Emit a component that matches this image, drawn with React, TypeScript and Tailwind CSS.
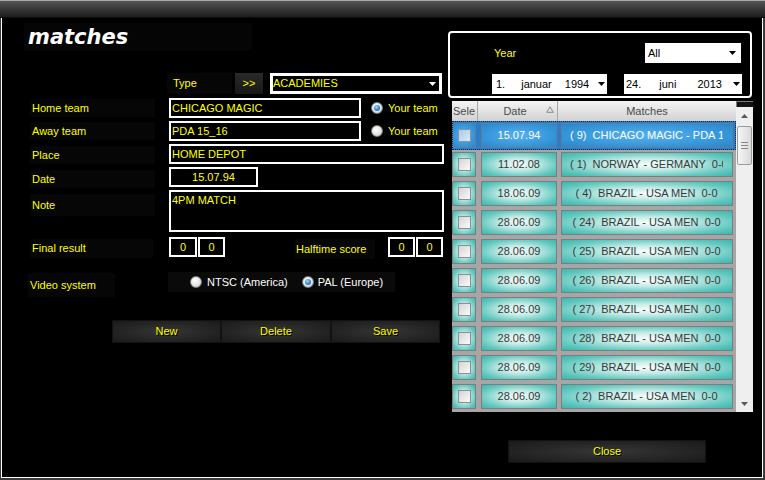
import type { ReactNode } from 'react';

const YELLOW = 'text-[#ffff00]';

const rows = [
  { date: '15.07.94', text: '( 9)  CHICAGO MAGIC - PDA 15_16  0-0', selected: true },
  { date: '11.02.08', text: '( 1)  NORWAY - GERMANY  0-0' },
  { date: '18.06.09', text: '( 4)  BRAZIL - USA MEN  0-0' },
  { date: '28.06.09', text: '( 24)  BRAZIL - USA MEN  0-0' },
  { date: '28.06.09', text: '( 25)  BRAZIL - USA MEN  0-0' },
  { date: '28.06.09', text: '( 26)  BRAZIL - USA MEN  0-0' },
  { date: '28.06.09', text: '( 27)  BRAZIL - USA MEN  0-0' },
  { date: '28.06.09', text: '( 28)  BRAZIL - USA MEN  0-0' },
  { date: '28.06.09', text: '( 29)  BRAZIL - USA MEN  0-0' },
  { date: '28.06.09', text: '( 2)  BRAZIL - USA MEN  0-0' },
  // only the top edge of this row shows below the last full one
  { date: '', text: '' },
];

function DownArrow({ color = '#000' }: { color?: string }) {
  return (
    <svg width="7" height="4" viewBox="0 0 7 4">
      <polygon points="0,0 7,0 3.5,4" fill={color} />
    </svg>
  );
}

function Radio({ checked }: { checked?: boolean }) {
  return (
    <span className="w-[12px] h-[12px] rounded-full border border-[#7c7c7c] bg-[radial-gradient(circle_at_40%_35%,#ffffff_0%,#e4e4e4_55%,#bdbdbd_100%)] flex items-center justify-center shrink-0">
      {checked && (
        <span className="w-[6px] h-[6px] rounded-full bg-[radial-gradient(circle_at_40%_35%,#a8dcff_0%,#2f86d6_55%,#184d86_100%)]" />
      )}
    </span>
  );
}

function Label({ children, className = '' }: { children: ReactNode; className?: string }) {
  return (
    <div className={`bg-[#060606] flex items-center ${YELLOW} ${className}`}>{children}</div>
  );
}

function Box({ className = '', children }: { className?: string; children?: ReactNode }) {
  return (
    <div className={`border-2 border-white bg-black ${YELLOW} leading-[16px] whitespace-pre overflow-hidden ${className}`}>
      {children}
    </div>
  );
}

function DarkButton({ className = '', children }: { className?: string; children: ReactNode }) {
  return (
    <div
      className={`h-[23px] flex items-center justify-center bg-[radial-gradient(ellipse_at_center,#363636_0%,#262626_55%,#1a1a1a_100%)] border border-[#121212] ${YELLOW} [text-shadow:1px_1px_0_#000] ${className}`}
    >
      {children}
    </div>
  );
}

function Checkbox({ selected }: { selected?: boolean }) {
  return (
    <span
      className={`w-[13px] h-[13px] border ${
        selected
          ? 'border-[#7e95ad] bg-gradient-to-br from-[#aac8e4] to-[#dbe9f5]'
          : 'border-[#8e8e8e] bg-gradient-to-br from-[#d4d4d4] to-[#fbfbfb]'
      }`}
    />
  );
}

function GridRow({ date, text, selected }: { date: string; text: string; selected?: boolean }) {
  const cell = selected
    ? 'border border-[#5f7f9c] bg-[radial-gradient(ellipse_at_center,#58b1ee_0%,#3898dc_60%,#2b85c9_100%)] text-white'
    : 'border border-[#7d7d7d] bg-[radial-gradient(ellipse_at_center,#f6fcfb_0%,#c4ebe6_35%,#62c8bf_75%,#3cb6ad_100%)] text-[#383838]';
  return (
    <div
      className={`h-[29px] shrink-0 flex items-start pt-[2px] ${
        selected ? 'bg-[#2c7cc8] outline outline-1 outline-dotted outline-[#0d2a4d] -outline-offset-1' : 'bg-[#a6a6a6]'
      }`}
    >
      <div className={`w-[24px] h-[25px] flex items-center justify-center ${cell}`}>
        <Checkbox selected={selected} />
      </div>
      <div className={`ml-[5px] w-[76px] h-[25px] flex items-center justify-center ${cell}`}>{date}</div>
      <div className={`ml-[4px] w-[172px] h-[25px] pl-[8px] pr-[9px] flex items-center ${cell}`}>
        <div className="w-full overflow-hidden whitespace-pre text-center">{text}</div>
      </div>
    </div>
  );
}

export default function App() {
  return (
    <div className="w-[765px] h-[480px] bg-[#3a3a3a] flex flex-col font-['Liberation_Sans',Arial,sans-serif] text-[11px] leading-[13px] overflow-hidden">
      {/* title bar */}
      <div className="h-[18px] shrink-0 border-t border-[#a9a9a9] bg-gradient-to-b from-[#555555] to-[#1d1d1d] border-b border-b-[#0e0e0e]" />

      <div className="flex-1 flex bg-black ml-[1px] mr-[2px] mb-[2px] border-l border-r border-b border-white">
        {/* left panel */}
        <div className="w-[445px] shrink-0 flex flex-col">
          <div className="mt-[5px] ml-[22px] w-[228px] h-[28px] bg-[#050505] flex items-center pl-[4px]">
            <span className="font-['DejaVu_Sans',sans-serif] font-bold italic text-[21px] leading-[28px] text-white">
              matches
            </span>
          </div>

          {/* type */}
          <div className="mt-[22px] ml-[165px] flex h-[21px]">
            <Label className="w-[65px] pl-[6px]">Type</Label>
            <div className={`ml-[3px] w-[28px] bg-gradient-to-b from-[#2b2b2b] to-[#171717] flex items-center justify-center ${YELLOW}`}>
              &gt;&gt;
            </div>
            <div className={`ml-[7px] w-[172px] border-[3px] border-white bg-black flex items-center justify-between pr-[3px] ${YELLOW}`}>
              <span>ACADEMIES</span>
              <DownArrow color="#ffffff" />
            </div>
          </div>

          {/* home team */}
          <div className="mt-[4px] flex items-center h-[20px]">
            <Label className="ml-[28px] w-[125px] h-[18px] pl-[2px]">Home team</Label>
            <Box className="ml-[14px] w-[192px] h-[20px] pl-[1px]">CHICAGO MAGIC</Box>
            <span className="ml-[10px]"><Radio checked /></span>
            <span className={`ml-[5px] ${YELLOW}`}>Your team</span>
          </div>

          {/* away team */}
          <div className="mt-[3px] flex items-center h-[20px]">
            <Label className="ml-[28px] w-[125px] h-[18px] pl-[2px]">Away team</Label>
            <Box className="ml-[14px] w-[192px] h-[20px] pl-[1px]">PDA 15_16</Box>
            <span className="ml-[10px]"><Radio /></span>
            <span className={`ml-[5px] ${YELLOW}`}>Your team</span>
          </div>

          {/* place */}
          <div className="mt-[3px] flex items-start h-[20px]">
            <Label className="ml-[28px] w-[125px] h-[18px] mt-[2px] pl-[2px]">Place</Label>
            <Box className="ml-[14px] w-[275px] h-[20px] pl-[1px]">HOME DEPOT</Box>
          </div>

          {/* date */}
          <div className="mt-[3px] flex items-start h-[20px]">
            <Label className="ml-[28px] w-[125px] h-[18px] mt-[3px] pl-[2px]">Date</Label>
            <Box className="ml-[14px] w-[89px] h-[20px] text-center">15.07.94</Box>
          </div>

          {/* note */}
          <div className="mt-[3px] flex items-start h-[42px]">
            <Label className="ml-[28px] w-[125px] h-[22px] mt-[4px] pl-[2px]">Note</Label>
            <Box className="ml-[14px] w-[275px] h-[42px] pl-[1px]">4PM MATCH</Box>
          </div>

          {/* scores */}
          <div className="mt-[5px] flex items-start h-[20px]">
            <Label className="ml-[28px] w-[123px] h-[19px] mt-[2px] pl-[2px]">Final result</Label>
            <Box className="ml-[16px] w-[28px] h-[20px] text-center">0</Box>
            <Box className="ml-[1px] w-[27px] h-[20px] text-center">0</Box>
            <Label className="ml-[69px] w-[81px] h-[20px] mt-[2px] pl-[2px]">Halftime score</Label>
            <Box className="ml-[13px] w-[27px] h-[20px] text-center">0</Box>
            <Box className="ml-[1px] w-[27px] h-[20px] text-center">0</Box>
          </div>

          {/* video system */}
          <div className="mt-[15px] flex items-start h-[25px]">
            <Label className="ml-[26px] w-[87px] h-[24px] mt-[1px] pl-[2px]">Video system</Label>
            <div className="ml-[53px] w-[227px] h-[20px] bg-[#0a0a0a] flex items-center pl-[22px] text-white">
              <Radio />
              <span className="ml-[5px]">NTSC (America)</span>
              <span className="ml-[14px]"><Radio checked /></span>
              <span className="ml-[4px]">PAL (Europe)</span>
            </div>
          </div>

          {/* actions */}
          <div className="mt-[23px] ml-[110px] flex">
            <DarkButton className="w-[109px]">New</DarkButton>
            <DarkButton className="w-[110px]">Delete</DarkButton>
            <DarkButton className="w-[109px]">Save</DarkButton>
          </div>
        </div>

        {/* right panel */}
        <div className="flex-1 flex flex-col">
          <div className="mt-[13px] ml-[1px] w-[304px] h-[67px] border-2 border-white rounded-[4px] flex flex-col">
            <div className="mt-[10px] flex items-center h-[20px]">
              <span className={`ml-[44px] ${YELLOW}`}>Year</span>
              <div className="ml-auto mr-[9px] w-[96px] h-[20px] bg-white flex items-center justify-between pl-[3px] pr-[5px] text-black">
                <span>All</span>
                <DownArrow />
              </div>
            </div>
            <div className="mt-[11px] flex items-center h-[20px] text-black">
              <div className="ml-[42px] w-[115px] h-[20px] bg-white flex items-center pl-[4px]">
                <span>1.</span>
                <span className="ml-[16px]">januar</span>
                <span className="ml-[13px]">1994</span>
                <span className="ml-[9px]"><DownArrow /></span>
              </div>
              <div className="ml-[17px] w-[118px] h-[20px] bg-white flex items-center pl-[2px]">
                <span>24.</span>
                <span className="ml-[18px]">juni</span>
                <span className="ml-[21px]">2013</span>
                <span className="ml-[11px]"><DownArrow /></span>
              </div>
            </div>
          </div>

          {/* grid */}
          <div className="mt-[3px] ml-[5px] w-[301px] h-[311px] flex overflow-hidden">
            <div className="w-[284px] flex flex-col overflow-hidden">
              <div className="h-[20px] shrink-0 flex bg-gradient-to-b from-[#f4f4f4] to-[#d2d2d2] text-[#4a4a4a]">
                <div className="w-[26px] border-r border-[#a8a8a8] pl-[1px] flex items-center overflow-hidden">Sele</div>
                <div className="w-[80px] border-r border-[#a8a8a8] relative flex items-center justify-center">
                  <span className="mr-[5px]">Date</span>
                  <svg className="absolute right-[3px] top-[5px]" width="8" height="7" viewBox="0 0 8 7">
                    <polygon points="4,0.8 7.3,6.3 0.7,6.3" fill="none" stroke="#8a8a8a" strokeWidth="1" />
                  </svg>
                </div>
                <div className="w-[178px] flex items-center justify-center">Matches</div>
              </div>
              {rows.map((r, i) => (
                <GridRow key={i} date={r.date} text={r.text} selected={r.selected} />
              ))}
            </div>

            {/* scrollbar */}
            <div className="w-[17px] flex flex-col bg-[#efefef]">
              <div className="h-[6px] shrink-0 bg-[#121212] border-t border-l border-[#7a7a7a]" />
              <div className="h-[17px] shrink-0 flex items-center justify-center">
                <svg width="7" height="4" viewBox="0 0 7 4">
                  <polygon points="0,4 7,4 3.5,0" fill="#5a5a5a" />
                </svg>
              </div>
              <div className="mt-[2px] mx-[1px] h-[39px] shrink-0 rounded-[2px] border border-[#9b9b9b] bg-gradient-to-r from-[#f6f6f6] to-[#d9d9d9] flex flex-col items-center justify-center gap-[2px]">
                <span className="w-[7px] h-[1px] bg-[#8a8a8a]" />
                <span className="w-[7px] h-[1px] bg-[#8a8a8a]" />
                <span className="w-[7px] h-[1px] bg-[#8a8a8a]" />
              </div>
              <div className="flex-1" />
              <div className="h-[17px] shrink-0 flex items-center justify-center">
                <DownArrow color="#5a5a5a" />
              </div>
            </div>
          </div>

          <DarkButton className="mt-[28px] ml-[61px] w-[198px]">Close</DarkButton>
        </div>
      </div>
    </div>
  );
}
